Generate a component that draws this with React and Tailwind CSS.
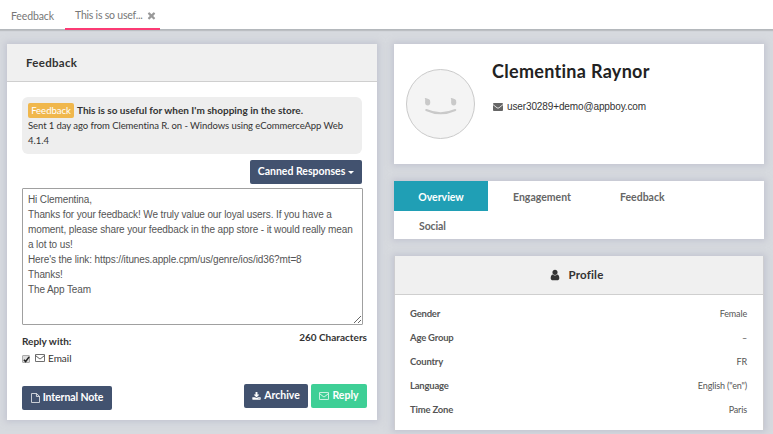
import React from "react";

const MESSAGE = `Hi Clementina,
Thanks for your feedback! We truly value our loyal users. If you have a
moment, please share your feedback in the app store - it would really mean
a lot to us!
Here's the link: https://itunes.apple.cpm/us/genre/ios/id36?mt=8
Thanks!
The App Team`;

const PROFILE = [
  ["Gender", "Female"],
  ["Age Group", "–"],
  ["Country", "FR"],
  ["Language", 'English ("en")'],
  ["Time Zone", "Paris"],
];

function Glyph({ d, className }) {
  return (
    <svg viewBox="0 0 1792 1792" fill="currentColor" className={className}>
      <path d={d} />
    </svg>
  );
}

const TIMES =
  "M1490 1322q0 40-28 68l-136 136q-28 28-68 28t-68-28l-294-294-294 294q-28 28-68 28t-68-28l-136-136q-28-28-28-68t28-68l294-294-294-294q-28-28-28-68t28-68l136-136q28-28 68-28t68 28l294 294 294-294q28-28 68-28t68 28l136 136q28 28 28 68t-28 68l-294 294 294 294q28 28 28 68z";
const USER =
  "M1536 1399q0 109-62.5 187t-150.5 78h-854q-88 0-150.5-78t-62.5-187q0-85 8.5-160.5t31.5-152 58.5-131 94-89 134.5-34.5q131 128 313 128t313-128q76 0 134.5 34.5t94 89 58.5 131 31.5 152 8.5 160.5zm-256-887q0 159-112.5 271.5t-271.5 112.5-271.5-112.5-112.5-271.5 112.5-271.5 271.5-112.5 271.5 112.5 112.5 271.5z";
const DOWNLOAD =
  "M1344 1344q0-26-19-45t-45-19-45 19-19 45 19 45 45 19 45-19 19-45zm256 0q0-26-19-45t-45-19-45 19-19 45 19 45 45 19 45-19 19-45zm128-224v320q0 40-28 68t-68 28h-1472q-40 0-68-28t-28-68v-320q0-40 28-68t68-28h465l135 136q58 56 136 56t136-56l136-136h464q40 0 68 28t28 68zm-325-569q17 41-14 70l-448 448q-18 19-45 19t-45-19l-448-448q-31-29-14-70 17-39 59-39h256v-448q0-26 19-45t45-19h256q26 0 45 19t19 45v448h256q42 0 59 39z";

function EnvelopeOutline({ className }) {
  return (
    <svg viewBox="0 0 10 8" fill="none" stroke="currentColor" strokeWidth="0.8" className={className}>
      <rect x="0.4" y="0.4" width="9.2" height="7.2" rx="0.7" />
      <path d="M0.6 1.6 L4.2 4.5 Q5 5.1 5.8 4.5 L9.4 1.6" />
    </svg>
  );
}

function FileOutline({ className }) {
  return (
    <svg viewBox="0 0 9 10" fill="none" stroke="currentColor" strokeWidth="0.8" className={className}>
      <path d="M1 0.4 H5.4 L8.6 3.4 V9 Q8.6 9.6 8 9.6 H1 Q0.4 9.6 0.4 9 V1 Q0.4 0.4 1 0.4 Z" />
      <path d="M5.4 0.6 V3.4 H8.4" />
    </svg>
  );
}

function EnvelopeSolid({ className }) {
  return (
    <svg viewBox="0 0 10 8" className={className}>
      <rect width="10" height="8" rx="0.9" fill="#666" />
      <path d="M0 1.6 L4 4.8 Q5 5.5 6 4.8 L10 1.6" fill="none" stroke="#fff" strokeWidth="0.8" />
    </svg>
  );
}

function Smiley() {
  return (
    <svg viewBox="0 0 70 70" className="h-[70px] w-[69px] shrink-0" preserveAspectRatio="none">
      <circle cx="35" cy="35" r="34.5" fill="#f4f4f4" stroke="#c4c4c4" strokeWidth="0.9" />
      <g fill="#c9c9c9">
        <ellipse cx="22" cy="33.3" rx="2.6" ry="3.2" />
        <path d="M19 29 Q22 28.6 24.5 32 L20 33 Z" />
        <ellipse cx="48.4" cy="33.3" rx="2.6" ry="3.2" />
        <path d="M45.4 29 Q48.4 28.6 50.9 32 L46.4 33 Z" />
      </g>
      <path d="M20.5 41 Q35 47.5 50 41" fill="none" stroke="#c9c9c9" strokeWidth="2" strokeLinecap="round" />
    </svg>
  );
}

const card = "bg-white shadow-[0_0_6px_2px_rgba(175,177,195,0.5)]";

export default function App() {
  return (
    <div className="flex h-[434px] w-[773px] flex-col overflow-hidden bg-[#d7dadf] font-[Lato,sans-serif] text-[#333] [font-variant-ligatures:none]">
      <nav className="flex h-[30px] shrink-0 border-b border-[#b4b8bc] bg-white text-[10.5px] text-[#777] shadow-[0_1px_1px_rgba(0,0,0,0.12)]">
        <div className="flex h-[30px] w-[65px] items-center pl-[11px] pt-[3px]">
          <span className="whitespace-nowrap tracking-[-0.12px]">Feedback</span>
        </div>
        <div className="flex h-[30px] w-[95px] items-center border-b-2 border-[#fb3b74] pl-[10px] pt-[3px]">
          <span className="whitespace-nowrap tracking-[-0.22px]">This is so usef...</span>
          <Glyph d={TIMES} className="ml-[4px] size-[11px] shrink-0 text-[#999]" />
        </div>
      </nav>

      <main className="flex items-start gap-[17px] pl-[7px] pt-[14px]">
        <section className={`flex h-[376px] w-[370px] flex-col ${card}`}>
          <header className="flex h-[38px] shrink-0 items-center border-b border-[#cfcfcf] bg-[#f0f0f0] pl-[19px] text-[11.5px] font-bold tracking-[0.3px]">
            <span>Feedback</span>
          </header>
          <div className="flex flex-col px-[15px] pt-[15px]">
            <div className="h-[57px] rounded-md bg-[#eee] pl-[6px] pt-[5px] text-[10px] leading-[15px]">
              <div className="flex items-center whitespace-nowrap">
                <span className="mt-px flex h-[15px] w-[46px] items-center justify-center rounded-[2px] bg-[#f0b74c] text-[9.5px] text-white">Feedback</span>
                <span className="ml-[3px] font-bold">This is so useful for when I'm shopping in the store.</span>
              </div>
              <p className="whitespace-nowrap text-[9.5px] tracking-[-0.08px]">Sent 1 day ago from Clementina R. on - Windows using eCommerceApp Web</p>
              <p className="text-[9.5px]">4.1.4</p>
            </div>
            <button className="mt-[6px] flex h-6 w-28 items-center justify-center gap-[3px] self-end rounded-[2px] bg-[#42526f] text-[10.5px] font-bold text-white">
              <span className="whitespace-nowrap">Canned Responses</span>
              <svg viewBox="0 0 6 3" className="h-[3px] w-[6px]" fill="currentColor"><path d="M0 0H6L3 3Z" /></svg>
            </button>
            <textarea
              className="mt-1 h-[137px] w-[341px] shrink-0 overflow-hidden rounded-[1px] border border-[#a0a0a0] bg-white px-[5px] py-[3px] font-['Liberation_Sans',Arial,sans-serif] text-[10px] leading-[15px] tracking-[-0.12px] whitespace-pre text-[#555]"
              defaultValue={MESSAGE}
            />
            <div className="-mr-[5px] flex justify-between pt-[5px] text-[10px] font-bold leading-[14px]">
              <span className="pt-[4px]">Reply with:</span>
              <span>260 Characters</span>
            </div>
            <label className="mt-[3px] flex h-[15px] items-center text-[10px]">
              <span className="mt-px flex size-2 items-center justify-center rounded-[1px] border border-[#aaa] bg-[#ddd]">
                <svg viewBox="0 0 8 8" className="size-[7px] shrink-0 text-[#222]" fill="none" stroke="currentColor" strokeWidth="1.8"><path d="M1 4.2L3 6.3L7 1" /></svg>
              </span>
              <EnvelopeOutline className="mb-px ml-[5px] h-2 w-[10px]" />
              <span className="ml-[3px]">Email</span>
            </label>
            <div className="-mr-[5px] mt-[18px] flex h-[26px] text-[10.5px] font-bold text-white">
              <button className="mt-[2px] flex h-6 w-[90px] items-center justify-center gap-[3px] rounded-[2px] bg-[#42526f]">
                <FileOutline className="h-[10px] w-[9px]" />
                <span className="whitespace-nowrap tracking-[-0.1px]">Internal Note</span>
              </button>
              <button className="ml-auto flex h-6 w-16 items-center justify-center gap-[3px] rounded-[2px] bg-[#42526f]">
                <Glyph d={DOWNLOAD} className="size-[9px]" />
                <span>Archive</span>
              </button>
              <button className="ml-[3px] flex h-6 w-14 items-center justify-center gap-[3px] rounded-[2px] bg-[#3ecf96]">
                <EnvelopeOutline className="h-2 w-[10px]" />
                <span>Reply</span>
              </button>
            </div>
          </div>
        </section>

        <div className="flex w-[370px] flex-col">
          <section className={`flex h-[120px] pl-3 ${card}`}>
            <div className="pt-[25px]"><Smiley /></div>
            <div className="flex flex-col pl-[17px] pt-[16px]">
              <h1 className="whitespace-nowrap text-[18px] font-bold leading-[22px] tracking-[0.3px] text-[#222]">Clementina Raynor</h1>
              <div className="mt-[18px] flex items-center pl-px text-[10px] leading-[14px]">
                <EnvelopeSolid className="h-2 w-[10px]" />
                <span className="ml-[4px] font-['Liberation_Sans',Arial,sans-serif] tracking-[-0.12px]">user30289+demo@appboy.com</span>
              </div>
            </div>
          </section>

          <section className={`mt-[17px] h-[58px] text-[10.5px] font-bold text-[#666] ${card}`}>
            <div className="flex h-[30px] items-center">
              <span className="flex h-[30px] w-[94px] items-center justify-center bg-[#209fb5] pt-[3px] text-white">Overview</span>
              <span className="ml-[25px] w-[107px] pt-[3px]">Engagement</span>
              <span className="pt-[3px]">Feedback</span>
            </div>
            <div className="flex h-7 items-center pl-[25px] pt-[3px]"><span className="tracking-[-0.1px]">Social</span></div>
          </section>

          <section className={`mt-[17px] h-[174px] border-l border-r border-[#cdcdd0] ${card}`}>
            <header className="flex h-[39px] items-center justify-center border-b border-[#cfcfcf] bg-[#f0f0f0] pb-px pr-[5px] text-[11.5px] font-bold tracking-[0.2px]">
              <Glyph d={USER} className="mr-[7px] size-3" />
              <span>Profile</span>
            </header>
            <dl className="pl-[15px] pr-4 pt-[7px] text-[#555]">
              {PROFILE.map(([label, value]) => (
                <div key={label} className="flex h-6 items-center justify-between">
                  <dt className="text-[9.5px] font-bold tracking-[-0.2px]">{label}</dt>
                  <dd className="pb-px text-[9px] tracking-[-0.15px]">{value}</dd>
                </div>
              ))}
            </dl>
          </section>
        </div>
      </main>
    </div>
  );
}
